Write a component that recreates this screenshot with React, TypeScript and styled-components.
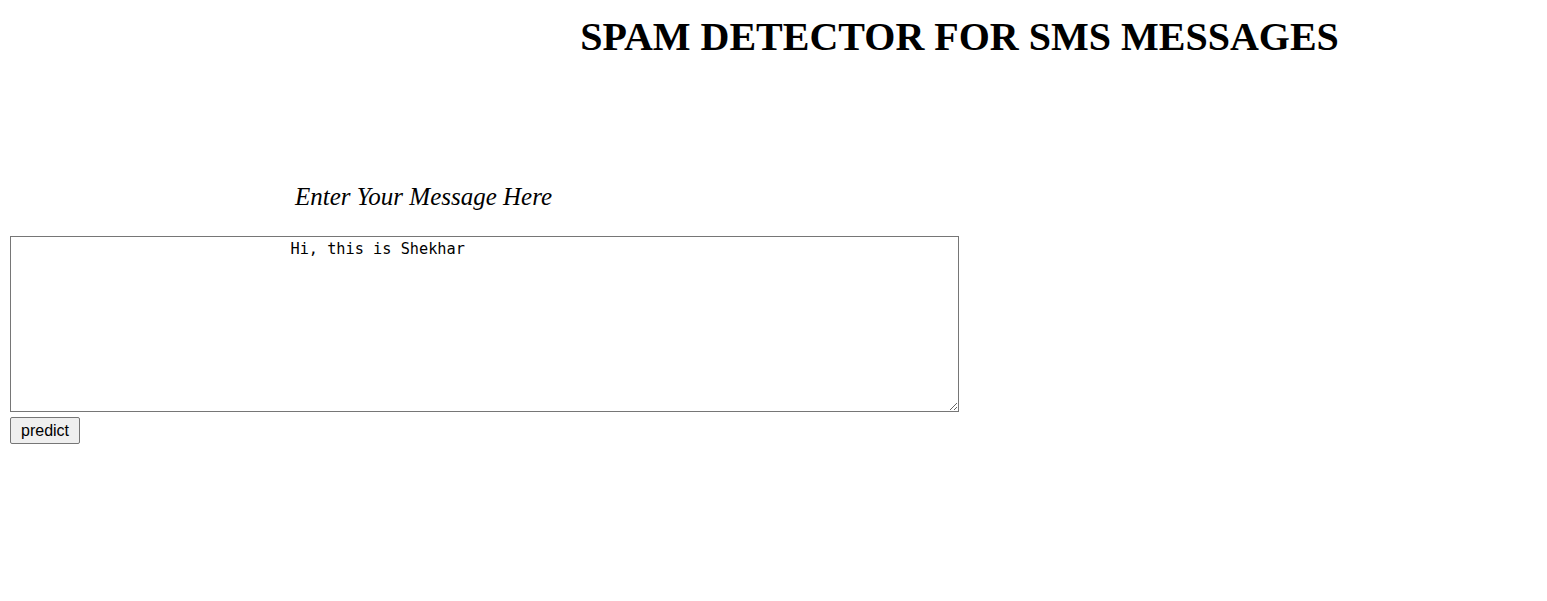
import React from 'react'
import styled, { createGlobalStyle } from 'styled-components'

const GlobalStyle = createGlobalStyle`
    html, body {
        margin: 0;
        background: #fff;
    }
    body {
        font-family: "Liberation Serif", "Times New Roman", serif;
        color: #000;
    }
`

const Page = styled.div`
    padding: 8px;
    display: flex;
    flex-direction: column;
    align-items: flex-start;
`

const Title = styled.h1`
    align-self: stretch;
    margin: 5px 0 0 372px;
    font-size: 40px;
    font-weight: 700;
    line-height: normal;
    text-align: center;
`

const Prompt = styled.div`
    width: 831px;
    margin-top: 122.5px;
    font-size: 25px;
    font-style: italic;
    line-height: normal;
    text-align: center;
`

const MessageBox = styled.textarea`
    width: 949px;
    height: 176px;
    box-sizing: border-box;
    margin: 25.75px 0 0 2px;
    padding: 3px 2px 2px 4px;
    border: 1px solid #767676;
    font-family: "DejaVu Sans Mono", "Liberation Mono", monospace;
    font-size: 15.25px;
    line-height: normal;
    color: #000;
    background: #fff;
    outline: none;
`

const PredictButton = styled.button`
    margin: 5px 0 0 2px;
    height: 27px;
    padding: 0 10px;
    box-sizing: border-box;
    border: 1px solid #767676;
    border-radius: 2px;
    background: #efefef;
    font-family: "Liberation Sans", Arial, sans-serif;
    font-size: 16px;
    color: #000;
    cursor: pointer;
`

const message = ' '.repeat(30) + 'Hi, this is Shekhar'

export default function App() {
    return (
        <>
            <GlobalStyle />
            <Page>
                <Title>SPAM DETECTOR FOR SMS MESSAGES</Title>
                <Prompt>Enter Your Message Here</Prompt>
                <MessageBox defaultValue={message} />
                <PredictButton type='button'>predict</PredictButton>
            </Page>
        </>
    )
}
